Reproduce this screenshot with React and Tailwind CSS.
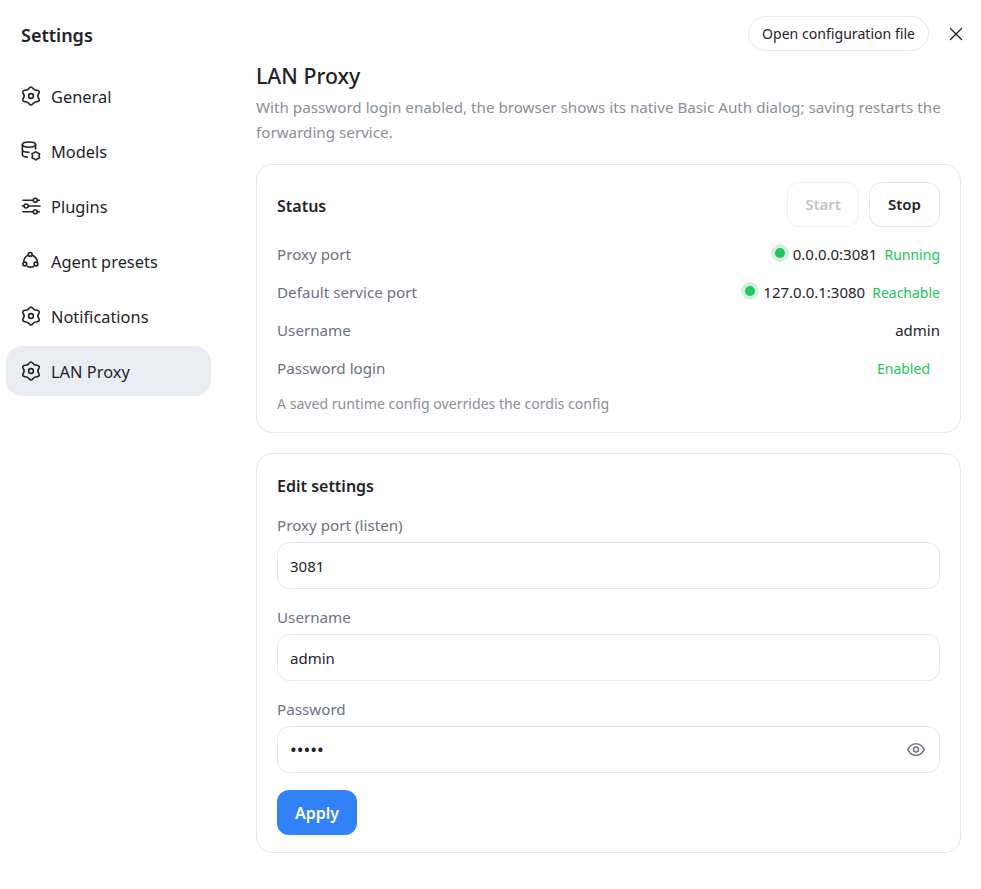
import { X } from "lucide-react";

const gearPath =
  "M8.2 2.2Q10 -0.2 11.8 2.2Q13 4.4 16 4.3Q19.4 4.6 17.8 7.6Q15.8 10 17.8 12.4Q19.4 15.4 16 15.7Q13 15.6 11.8 17.8Q10 20.2 8.2 17.8Q7 15.6 4 15.7Q0.6 15.4 2.2 12.4Q4.2 10 2.2 7.6Q0.6 4.6 4 4.3Q7 4.4 8.2 2.2Z";

const Svg = ({ children, className }) => (
  <svg
    width="20"
    height="20"
    viewBox="0 0 20 20"
    fill="none"
    stroke="currentColor"
    strokeWidth="1.6"
    strokeLinecap="round"
    strokeLinejoin="round"
    className={className}
  >
    {children}
  </svg>
);

const GearIcon = () => (
  <Svg>
    <path d={gearPath} />
    <circle cx="10" cy="10" r="2.4" />
  </Svg>
);

const ModelsIcon = () => (
  <Svg>
    <ellipse cx="8" cy="3.6" rx="6.6" ry="2.6" />
    <path d="M1.4 3.6V13.6C1.4 15 3.4 16 6.4 16.2M14.6 3.6V8M1.4 8.8C1.4 10.2 3.8 11.3 8 11.3" />
    <path d={gearPath} transform="translate(10.2 10.2) scale(.46)" strokeWidth="3.4" />
  </Svg>
);

const PluginsIcon = () => (
  <Svg>
    <path d="M2 4.3H12.2M16.4 4.3H18.4M2 15.7H12.2M16.4 15.7H18.4M1.4 10H3M7.2 10H19" />
    <circle cx="14.3" cy="4.3" r="2" />
    <circle cx="5.1" cy="10" r="2" />
    <circle cx="14.3" cy="15.7" r="2" />
  </Svg>
);

const AgentIcon = () => (
  <Svg>
    <circle cx="9.2" cy="3.4" r="1.9" />
    <circle cx="3.8" cy="13" r="1.9" />
    <circle cx="15" cy="13" r="1.9" />
    <path d="M11.6 4.4A7.6 7.6 0 0 1 16.4 10.6M12.6 15.4A7.6 7.6 0 0 1 6.4 15.4M2.7 10.6A7.6 7.6 0 0 1 6.8 4.4" />
  </Svg>
);

const EyeIcon = () => (
  <Svg className="mr-[1px] text-[#71767f]">
    <path strokeWidth="1.5" d="M1.8 9.6C4 5.6 6.9 3.8 10 3.8C13.1 3.8 16 5.6 18.2 9.6C16 13.6 13.1 15.4 10 15.4C6.9 15.4 4 13.6 1.8 9.6Z" />
    <circle strokeWidth="1.5" cx="10" cy="9.6" r="2.5" />
  </Svg>
);

const navItems = [
  { label: "General", icon: GearIcon },
  { label: "Models", icon: ModelsIcon },
  { label: "Plugins", icon: PluginsIcon },
  { label: "Agent presets", icon: AgentIcon },
  { label: "Notifications", icon: GearIcon },
  { label: "LAN Proxy", icon: GearIcon, active: true },
];

const Status = ({ address, state }) => (
  <div className="flex items-center gap-[7px]">
    <div className="flex items-center gap-1">
      <span className="mb-[2px] flex h-[18px] w-[18px] items-center justify-center rounded-full bg-[#d6f0df]">
        <span className="h-[10px] w-[10px] rounded-full bg-[#22c55e]" />
      </span>
      <span>{address}</span>
    </div>
    <span className="text-[14px] text-[#22c55e]">{state}</span>
  </div>
);

const Row = ({ label, children }) => (
  <div className="flex h-[38px] items-center justify-between text-[15px]">
    <span className="text-[15.2px] text-[#6b7280]">{label}</span>
    {children}
  </div>
);

const Field = ({ label, value, password, children }) => (
  <div className="flex flex-col gap-[5px]">
    <label className="mt-[1px] text-[15.2px] leading-[23px] text-[#6b7280]">{label}</label>
    <div className="flex h-[47px] items-center justify-between rounded-xl border border-[#e5e7eb] px-[12px] text-[15px] text-[#1f2329]">
      <span className={password ? "text-[18px]" : "pt-[2px]"}>{value}</span>
      {children}
    </div>
  </div>
);

export default function App() {
  return (
    <div className="flex h-[889px] w-[981px] bg-white font-['Noto_Sans','Liberation_Sans',sans-serif] text-[#1f2329]">
      <aside className="flex w-[256px] flex-col pl-[6px] pr-[45px]">
        <h2 className="px-[15px] pt-[20px] pb-[21px] text-[18px] font-semibold leading-[30px]">Settings</h2>
        <nav className="flex flex-col gap-[5px]">
          {navItems.map(({ label, icon: Icon, active }) => (
            <div
              key={label}
              className={`flex h-[50px] items-center gap-[10px] rounded-2xl px-[15px] text-[16.4px] ${active ? "bg-[#e9ecf2]" : ""}`}
            >
              <Icon />
              <span className="pt-[2px]">{label}</span>
            </div>
          ))}
        </nav>
      </aside>

      <main className="flex flex-1 flex-col pr-[20px]">
        <div className="-mr-[6px] flex h-[61px] items-center justify-end gap-[16px] pt-[6px]">
          <button className="h-[35px] rounded-full border border-[#e5e7eb] px-[13px] text-[14.1px]">Open configuration file</button>
          <X size={22} strokeWidth={1.5} />
        </div>

        <h1 className="text-[21.3px] font-medium leading-[30px]">LAN Proxy</h1>
        <p className="mt-[4px] text-[15.2px] leading-[25px] text-[#8a8f98]">
          With password login enabled, the browser shows its native Basic Auth dialog; saving restarts the forwarding service.
        </p>

        <section className="mt-[19px] rounded-2xl border border-[#e5e7eb] px-[20px] pt-[17px] pb-[17px]">
          <div className="flex items-center justify-between">
            <h3 className="pt-[2px] text-[16px] font-semibold">Status</h3>
            <div className="flex gap-[10px]">
              <button className="h-[45px] w-[72px] rounded-xl border border-[#eeeff1] text-[15px] font-semibold text-[#c4c6ca]">Start</button>
              <button className="h-[45px] w-[71px] rounded-xl border border-[#e5e7eb] text-[15px] font-semibold">Stop</button>
            </div>
          </div>
          <div className="mt-[8px]">
            <Row label="Proxy port">
              <Status address="0.0.0.0:3081" state="Running" />
            </Row>
            <Row label="Default service port">
              <Status address="127.0.0.1:3080" state="Reachable" />
            </Row>
            <Row label="Username">
              <span>admin</span>
            </Row>
            <Row label="Password login">
              <span className="pr-[10px] text-[14px] text-[#22c55e]">Enabled</span>
            </Row>
          </div>
          <p className="mt-[6px] text-[14.1px] leading-[22px] text-[#8a8f98]">A saved runtime config overrides the cordis config</p>
        </section>

        <section className="mt-[20px] flex flex-col gap-[6px] rounded-2xl border border-[#e5e7eb] px-[20px] pt-[19px] pb-[17px]">
          <h3 className="mb-[8px] text-[16px] font-semibold leading-[26px]">Edit settings</h3>
          <div className="flex flex-col gap-[16px]">
            <Field label="Proxy port (listen)" value="3081" />
            <Field label="Username" value="admin" />
            <Field label="Password" value="•••••" password>
              <EyeIcon />
            </Field>
          </div>
          <button className="mt-[11px] h-[45px] w-[80px] rounded-xl bg-[#3182f6] text-[16px] font-semibold text-white">Apply</button>
        </section>
      </main>
    </div>
  );
}
